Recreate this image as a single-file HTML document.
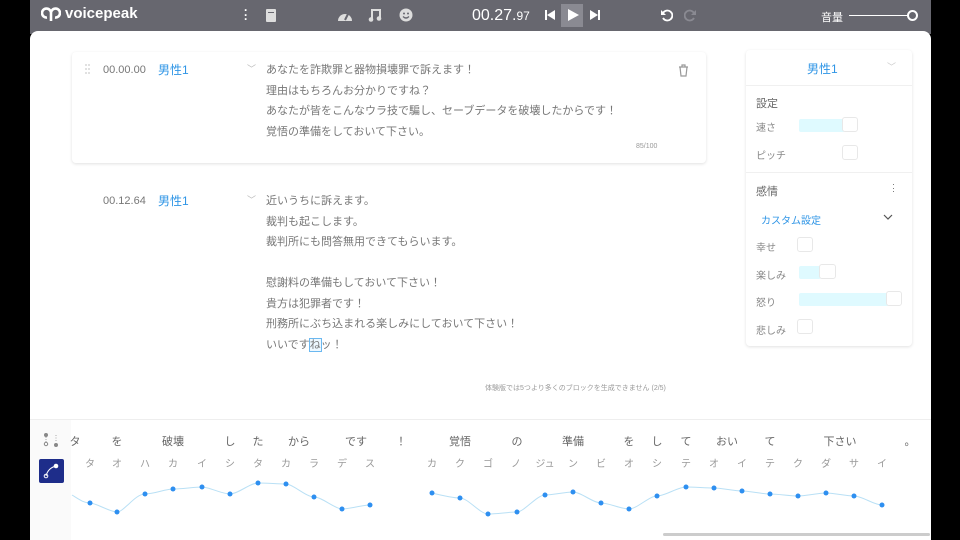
<!DOCTYPE html>
<html><head><meta charset="utf-8"><style>
*{margin:0;padding:0;box-sizing:border-box}
body{width:960px;height:540px;background:#000;position:relative;overflow:hidden;font-family:"Liberation Sans","Noto Sans CJK JP",sans-serif;color:#777}
.a{position:absolute}
#top{left:30px;top:0;width:901px;height:34px;background:#67676f}
#main{left:30px;top:31px;width:901px;height:509px;background:#fff;border-radius:8px 8px 0 0}
.t{position:absolute;white-space:nowrap;font-size:11px;line-height:20.5px;color:#777}
.card{position:absolute;background:#fff;border-radius:4px;box-shadow:0 1px 3px rgba(0,0,0,.12)}
.blue{color:#2f95e6}
.lbl{position:absolute;font-size:10px;color:#888}
.sw{position:absolute;height:15px;border:1px solid #e8e8e8;border-radius:3px;background:#fff}
.fill{position:absolute;height:13px;background:#dffaff;border-radius:2px}
.w{position:absolute;font-size:11px;color:#666;top:433px;transform:translateX(-50%)}
.k{position:absolute;font-size:10px;color:#999;top:455px;transform:translateX(-50%)}
</style></head><body>
<div id="top" class="a"></div>
<svg class="a" style="left:41px;top:7px" width="20" height="16" viewBox="0 0 20 16"><path d="M10 14V6M10 6a4.5 4.5 0 1 0-4 4.5M10 6a4.5 4.5 0 1 1 4 4.5" stroke="#fff" stroke-width="2.6" fill="none"/></svg>
<div class="a" style="left:65px;top:5px;font-size:15px;color:#fff;font-weight:bold">voicepeak</div>
<div class="a" style="left:244px;top:8px;width:3px;height:14px;color:#fff;font-size:12px;line-height:4.5px;font-weight:bold">·<br>·<br>·</div>
<div class="a" style="left:266px;top:9px;width:10px;height:13px;background:#ddd;border-radius:1px"></div>
<div class="a" style="left:268px;top:12px;width:6px;height:1px;background:#67676f"></div>
<svg class="a" style="left:337px;top:9px" width="16" height="13"><path d="M1 12A7 7 0 1 1 15 12Z" fill="#ddd"/><path d="M8 11L11 5" stroke="#67676f" stroke-width="2"/></svg>
<svg class="a" style="left:368px;top:8px" width="14" height="14"><path d="M4 11V2H12V10" stroke="#ddd" stroke-width="2" fill="none"/><circle cx="3" cy="11.5" r="2.3" fill="#ddd"/><circle cx="11" cy="10.5" r="2.3" fill="#ddd"/></svg>
<svg class="a" style="left:399px;top:8px" width="14" height="14"><circle cx="7" cy="7" r="6.5" fill="#ddd"/><circle cx="5" cy="5.5" r="1" fill="#67676f"/><circle cx="9" cy="5.5" r="1" fill="#67676f"/><path d="M4 8.5Q7 11.5 10 8.5" stroke="#67676f" fill="none" stroke-width="1.3"/></svg>
<div class="a" style="left:472px;top:7px;color:#fff;font-size:16px">00.27.<span style="font-size:12px">97</span></div>
<svg class="a" style="left:544px;top:9px" width="12" height="12"><rect x="1" y="1" width="2" height="10" fill="#fff"/><path d="M11 1V11L3 6Z" fill="#fff"/></svg>
<div class="a" style="left:561px;top:4px;width:22px;height:23px;background:#8a8a92"></div>
<svg class="a" style="left:566px;top:8px" width="14" height="14"><path d="M2 1V13L13 7Z" fill="#fff"/></svg>
<svg class="a" style="left:589px;top:9px" width="12" height="12"><rect x="9" y="1" width="2" height="10" fill="#fff"/><path d="M1 1V11L9 6Z" fill="#fff"/></svg>
<svg class="a" style="left:660px;top:9px" width="13" height="13"><path d="M3 4A5 5 0 1 1 3 9" stroke="#fff" stroke-width="1.8" fill="none"/><path d="M1 1V6H6Z" fill="#fff"/></svg>
<svg class="a" style="left:684px;top:9px" width="13" height="13"><path d="M10 4A5 5 0 1 0 10 9" stroke="#8a8a92" stroke-width="1.8" fill="none"/><path d="M12 1V6H7Z" fill="#8a8a92"/></svg>
<div class="a" style="left:821px;top:9px;color:#fff;font-size:11px">音量</div>
<div class="a" style="left:849px;top:15px;width:60px;height:1px;background:#fff"></div>
<div class="a" style="left:907px;top:10px;width:11px;height:11px;border:2px solid #fff;border-radius:50%"></div>

<div id="main" class="a"></div>
<div class="card" style="left:72px;top:52px;width:634px;height:111px"></div>
<svg class="a" style="left:85px;top:64px" width="6" height="11"><g fill="#ccc"><circle cx="1" cy="1" r="0.9"/><circle cx="4" cy="1" r="0.9"/><circle cx="1" cy="5" r="0.9"/><circle cx="4" cy="5" r="0.9"/><circle cx="1" cy="9" r="0.9"/><circle cx="4" cy="9" r="0.9"/></g></svg>
<div class="t" style="left:103px;top:60px">00.00.00</div>
<div class="t blue" style="left:158px;top:60px;font-size:12px">男性1</div>
<div class="t" style="left:247px;top:59px;color:#bbb;font-size:9px">﹀</div>
<div class="t" style="left:266px;top:60px">あなたを詐欺罪と器物損壊罪で訴えます！<br>理由はもちろんお分かりですね？<br>あなたが皆をこんなウラ技で騙し、セーブデータを破壊したからです！<br>覚悟の準備をしておいて下さい。</div>
<svg class="a" style="left:678px;top:64px" width="11" height="13"><path d="M1 3H10M4 3V1H7V3M2 3L3 12H8L9 3" stroke="#999" fill="none" stroke-width="1.2"/></svg>
<div class="a" style="left:636px;top:143px;font-size:7px;color:#999">85/100</div>
<div class="t" style="left:103px;top:191px">00.12.64</div>
<div class="t blue" style="left:158px;top:191px;font-size:12px">男性1</div>
<div class="t" style="left:247px;top:190px;color:#bbb;font-size:9px">﹀</div>
<div class="t" style="left:266px;top:191px">近いうちに訴えます。<br>裁判も起こします。<br>裁判所にも問答無用できてもらいます。<br>&nbsp;<br>慰謝料の準備もしておいて下さい！<br>貴方は犯罪者です！<br>刑務所にぶち込まれる楽しみにしておいて下さい！<br>いいです<span style="outline:1px solid #6bb8f0;background:#eef8ff">ね</span>ッ！</div>
<div class="a" style="left:485px;top:383px;font-size:7px;color:#999">体験版では5つより多くのブロックを生成できません (2/5)</div>
<div class="card" style="left:746px;top:50px;width:166px;height:296px"></div>
<div class="a" style="left:746px;top:85px;width:166px;height:1px;background:#f0f0f0"></div>
<div class="a" style="left:746px;top:172px;width:166px;height:1px;background:#f0f0f0"></div>
<div class="a blue" style="left:807px;top:60px;font-size:12px">男性1</div>
<div class="a" style="left:887px;top:60px;color:#ccc;font-size:9px">﹀</div>
<div class="a" style="left:756px;top:95px;font-size:11px;color:#666">設定</div>
<div class="lbl" style="left:756px;top:119px">速さ</div>
<div class="fill" style="left:799px;top:119px;width:46px"></div>
<div class="sw" style="left:842px;top:117px;width:16px"></div>
<div class="lbl" style="left:756px;top:147px">ピッチ</div>
<div class="sw" style="left:842px;top:145px;width:16px"></div>
<div class="a" style="left:756px;top:183px;font-size:11px;color:#666">感情</div>
<div class="a" style="left:892px;top:183px;font-size:9px;line-height:3.5px;color:#666">·<br>·<br>·</div>
<div class="a blue" style="left:761px;top:212px;font-size:10px">カスタム設定</div>
<svg class="a" style="left:883px;top:214px" width="10" height="6"><path d="M1 1L5 5L9 1" stroke="#555" fill="none" stroke-width="1.2"/></svg>
<div class="lbl" style="left:756px;top:239px">幸せ</div>
<div class="sw" style="left:797px;top:237px;width:16px"></div>
<div class="lbl" style="left:756px;top:267px">楽しみ</div>
<div class="fill" style="left:799px;top:266px;width:22px"></div>
<div class="sw" style="left:819px;top:264px;width:17px"></div>
<div class="lbl" style="left:756px;top:294px">怒り</div>
<div class="fill" style="left:799px;top:293px;width:90px"></div>
<div class="sw" style="left:886px;top:291px;width:16px"></div>
<div class="lbl" style="left:756px;top:322px">悲しみ</div>
<div class="sw" style="left:797px;top:319px;width:16px"></div>
<div class="a" style="left:30px;top:419px;width:901px;height:1px;background:#eee"></div>
<div class="a" style="left:30px;top:420px;width:41px;height:120px;background:#fafafa"></div>
<svg class="a" style="left:42px;top:432px" width="18" height="16"><circle cx="4" cy="3" r="2" fill="#888"/><path d="M4 5V10" stroke="#aaa" stroke-dasharray="1 1"/><circle cx="4" cy="12" r="1.7" fill="none" stroke="#888"/><circle cx="14" cy="13" r="2" fill="#888"/><path d="M14 3V10" stroke="#aaa" stroke-dasharray="1 1.5"/></svg>
<div class="a" style="left:39px;top:459px;width:25px;height:24px;background:#1e2d8a;border-radius:2px"></div>
<svg class="a" style="left:39px;top:459px" width="25" height="24"><path d="M7 17Q9 9 17 7" stroke="#fff" fill="none"/><circle cx="17" cy="7" r="2.3" fill="#fff"/><circle cx="7" cy="17" r="1.8" fill="none" stroke="#fff"/></svg>
<div class="w" style="left:75px">タ</div><div class="w" style="left:117px">を</div><div class="w" style="left:173px">破壊</div><div class="w" style="left:230px">し</div><div class="w" style="left:258px">た</div><div class="w" style="left:299px">から</div><div class="w" style="left:356px">です</div><div class="w" style="left:401px">！</div><div class="w" style="left:460px">覚悟</div><div class="w" style="left:517px">の</div><div class="w" style="left:573px">準備</div><div class="w" style="left:629px">を</div><div class="w" style="left:657px">し</div><div class="w" style="left:686px">て</div><div class="w" style="left:727px">おい</div><div class="w" style="left:770px">て</div><div class="w" style="left:840px">下さい</div><div class="w" style="left:910px">。</div>
<div class="k" style="left:90px">タ</div><div class="k" style="left:117px">オ</div><div class="k" style="left:145px">ハ</div><div class="k" style="left:173px">カ</div><div class="k" style="left:202px">イ</div><div class="k" style="left:230px">シ</div><div class="k" style="left:258px">タ</div><div class="k" style="left:286px">カ</div><div class="k" style="left:314px">ラ</div><div class="k" style="left:342px">デ</div><div class="k" style="left:370px">ス</div>
<div class="k" style="left:432px">カ</div><div class="k" style="left:460px">ク</div><div class="k" style="left:488px">ゴ</div><div class="k" style="left:516px">ノ</div><div class="k" style="left:545px">ジュ</div><div class="k" style="left:573px">ン</div><div class="k" style="left:601px">ビ</div><div class="k" style="left:629px">オ</div><div class="k" style="left:657px">シ</div><div class="k" style="left:686px">テ</div><div class="k" style="left:714px">オ</div><div class="k" style="left:742px">イ</div><div class="k" style="left:770px">テ</div><div class="k" style="left:798px">ク</div><div class="k" style="left:826px">ダ</div><div class="k" style="left:854px">サ</div><div class="k" style="left:882px">イ</div>
<svg class="a" style="left:0;top:0" width="960" height="540">
<path d="M72 495C80 500 84 503 90 503S110 512 117 512S135 494 145 494S165 489 173 489S195 487 202 487S222 494 230 494S250 483 258 483S279 484 286 484S306 497 314 497S335 509 342 509S363 505 370 505" stroke="#b9e0f5" fill="none"/>
<path d="M432 493S452 498 460 498S480 514 488 514S510 512 517 512S537 495 545 495S565 492 573 492S593 503 601 503S621 509 629 509S649 496 657 496S678 487 686 487S706 488 714 488S734 491 742 491S762 494 770 494S790 496 798 496S818 493 826 493S846 496 854 496S874 505 882 505" stroke="#b9e0f5" fill="none"/>
<g fill="#2e8ff0">
<circle cx="90" cy="503" r="2.5"/><circle cx="117" cy="512" r="2.5"/><circle cx="145" cy="494" r="2.5"/><circle cx="173" cy="489" r="2.5"/><circle cx="202" cy="487" r="2.5"/><circle cx="230" cy="494" r="2.5"/><circle cx="258" cy="483" r="2.5"/><circle cx="286" cy="484" r="2.5"/><circle cx="314" cy="497" r="2.5"/><circle cx="342" cy="509" r="2.5"/><circle cx="370" cy="505" r="2.5"/>
<circle cx="432" cy="493" r="2.5"/><circle cx="460" cy="498" r="2.5"/><circle cx="488" cy="514" r="2.5"/><circle cx="517" cy="512" r="2.5"/><circle cx="545" cy="495" r="2.5"/><circle cx="573" cy="492" r="2.5"/><circle cx="601" cy="503" r="2.5"/><circle cx="629" cy="509" r="2.5"/><circle cx="657" cy="496" r="2.5"/><circle cx="686" cy="487" r="2.5"/><circle cx="714" cy="488" r="2.5"/><circle cx="742" cy="491" r="2.5"/><circle cx="770" cy="494" r="2.5"/><circle cx="798" cy="496" r="2.5"/><circle cx="826" cy="493" r="2.5"/><circle cx="854" cy="496" r="2.5"/><circle cx="882" cy="505" r="2.5"/>
</g></svg>
<div class="a" style="left:663px;top:533px;width:267px;height:3px;background:#ccc;border-radius:2px"></div>
</body></html>
